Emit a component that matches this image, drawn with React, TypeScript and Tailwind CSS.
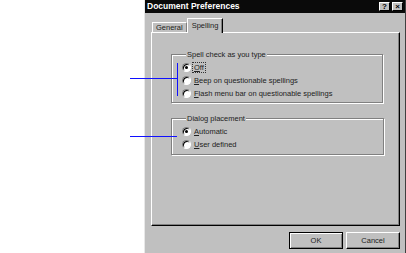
import { FC, ReactNode } from 'react'

const Radio: FC<{ checked?: boolean; children: ReactNode; focus?: boolean }> = ({
  checked,
  children,
  focus,
}) => (
  <div className="flex items-center h-[13px]">
    <span className="flex items-center justify-center w-[9px] h-[9px] rounded-full bg-white border border-t-[#808080] border-l-[#808080] border-r-white border-b-white shadow-[inset_1px_1px_0_#000]">
      {checked && <span className="w-[3px] h-[3px] rounded-full bg-black" />}
    </span>
    <span
      className={
        focus
          ? 'ml-[2px] px-[1px] leading-[9px] outline outline-1 outline-dotted outline-[#333]'
          : 'ml-[3px] leading-[9px]'
      }
    >
      {children}
    </span>
  </div>
)

const Group: FC<{ title: string; children: ReactNode; className?: string }> = ({
  title,
  children,
  className,
}) => (
  <fieldset
    className={`border border-[#808080] shadow-[1px_1px_0_#fff,inset_1px_1px_0_#fff] pl-[10px] ${className ?? ''}`}
  >
    <legend className="ml-[4px] px-[1px] bg-[#c0c0c0] leading-[9px]">{title}</legend>
    {children}
  </fieldset>
)

const Btn: FC<{ children: ReactNode; primary?: boolean }> = ({ children, primary }) => (
  <button
    className={`h-[17px] w-[54px] bg-[#c0c0c0] text-[7.5px] leading-none ${
      primary
        ? 'border border-black shadow-[inset_1px_1px_0_#fff,inset_-1px_-1px_0_#808080]'
        : 'border border-t-white border-l-white border-r-black border-b-black shadow-[inset_-1px_-1px_0_#808080]'
    }`}
  >
    {children}
  </button>
)

const TitleBtn: FC<{ children: ReactNode }> = ({ children }) => (
  <span className="flex items-center justify-center w-[11px] h-[9px] bg-[#c0c0c0] border border-t-white border-l-white border-r-black border-b-black text-[8px] font-bold leading-none text-black">
    {children}
  </span>
)

export default function App() {
  return (
    <div className="relative w-[406px] h-[253px] overflow-hidden bg-white flex font-['Liberation_Sans',Arial,sans-serif] text-[7.5px] text-[#222]">
      <div className="w-[144px] shrink-0" />

      <div className="flex flex-col w-[262px] h-[262px] bg-[#c0c0c0] border-l border-l-[#e8e8e8] border-r border-r-[#404040]">
        <div className="flex items-center justify-between h-[13px] bg-[#0a0a0a] pl-[2px] pr-[2px]">
          <span className="text-white font-bold text-[8.5px] leading-none">Document Preferences</span>
          <div className="flex gap-[2px]">
            <TitleBtn>?</TitleBtn>
            <TitleBtn>×</TitleBtn>
          </div>
        </div>

        <div className="flex items-end h-[19px] pl-[7px]">
          <div className="h-[10px] px-[3px] flex items-center border-t border-l border-white border-r border-r-[#808080]">
            General
          </div>
          <div className="relative z-10 -mb-[1px] h-[15px] px-[4px] pt-[1px] flex items-start bg-[#c0c0c0] border-t border-l border-white border-r border-r-black shadow-[inset_-1px_0_0_#808080]">
            Spelling
          </div>
        </div>

        <div className="ml-[6px] w-[249px] h-[194px] border border-t-white border-l-white border-r-black border-b-black shadow-[inset_-1px_-1px_0_#808080] pt-[17px] pl-[19px]">
          <Group title="Spell check as you type" className="w-[212px] h-[53px]">
            <div className="pt-[2px]">
              <Radio checked focus>
                <u>O</u>ff
              </Radio>
              <Radio>
                <u>B</u>eep on questionable spellings
              </Radio>
              <Radio>
                <u>F</u>lash menu bar on questionable spellings
              </Radio>
            </div>
          </Group>
          <Group title="Dialog placement" className="mt-[11px] w-[213px] h-[41px]">
            <div className="pt-[2px]">
              <Radio checked>
                <u>A</u>utomatic
              </Radio>
              <Radio>
                <u>U</u>ser defined
              </Radio>
            </div>
          </Group>
        </div>

        <div className="flex justify-end gap-[3px] mt-[6px] pr-[5px]">
          <Btn primary>OK</Btn>
          <Btn>Cancel</Btn>
        </div>
      </div>

      <div className="absolute left-[130px] top-[78px] w-[47px] h-px bg-[#1010ff]" />
      <div className="absolute left-[177px] top-[63px] w-px h-[33px] bg-[#1010ff]" />
      <div className="absolute left-[130px] top-[136px] w-[47px] h-px bg-[#1010ff]" />
    </div>
  )
}
